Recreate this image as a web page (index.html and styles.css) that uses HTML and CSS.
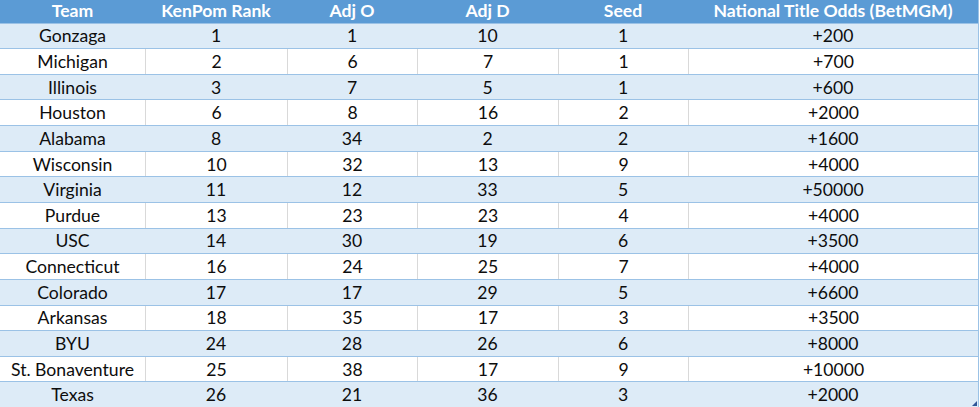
FILE: index.html
```html
<!DOCTYPE html>
<html>
<head>
<meta charset="utf-8">
<link rel="stylesheet" href="styles.css">
</head>
<body>
<div class="sheet">
  <div class="row head">
    <div class="c c1">Team</div><div class="c c2">KenPom Rank</div><div class="c c3">Adj O</div><div class="c c4">Adj D</div><div class="c c5">Seed</div><div class="c c6">National Title Odds (BetMGM)</div>
  </div>
  <div class="row band"><div class="c c1">Gonzaga</div><div class="c c2">1</div><div class="c c3">1</div><div class="c c4">10</div><div class="c c5">1</div><div class="c c6">+200</div></div>
  <div class="row plain"><div class="c c1">Michigan</div><div class="c c2">2</div><div class="c c3">6</div><div class="c c4">7</div><div class="c c5">1</div><div class="c c6">+700</div></div>
  <div class="row band"><div class="c c1">Illinois</div><div class="c c2">3</div><div class="c c3">7</div><div class="c c4">5</div><div class="c c5">1</div><div class="c c6">+600</div></div>
  <div class="row plain"><div class="c c1">Houston</div><div class="c c2">6</div><div class="c c3">8</div><div class="c c4">16</div><div class="c c5">2</div><div class="c c6">+2000</div></div>
  <div class="row band"><div class="c c1">Alabama</div><div class="c c2">8</div><div class="c c3">34</div><div class="c c4">2</div><div class="c c5">2</div><div class="c c6">+1600</div></div>
  <div class="row plain"><div class="c c1">Wisconsin</div><div class="c c2">10</div><div class="c c3">32</div><div class="c c4">13</div><div class="c c5">9</div><div class="c c6">+4000</div></div>
  <div class="row band"><div class="c c1">Virginia</div><div class="c c2">11</div><div class="c c3">12</div><div class="c c4">33</div><div class="c c5">5</div><div class="c c6">+50000</div></div>
  <div class="row plain"><div class="c c1">Purdue</div><div class="c c2">13</div><div class="c c3">23</div><div class="c c4">23</div><div class="c c5">4</div><div class="c c6">+4000</div></div>
  <div class="row band"><div class="c c1">USC</div><div class="c c2">14</div><div class="c c3">30</div><div class="c c4">19</div><div class="c c5">6</div><div class="c c6">+3500</div></div>
  <div class="row plain"><div class="c c1">Connecticut</div><div class="c c2">16</div><div class="c c3">24</div><div class="c c4">25</div><div class="c c5">7</div><div class="c c6">+4000</div></div>
  <div class="row band"><div class="c c1">Colorado</div><div class="c c2">17</div><div class="c c3">17</div><div class="c c4">29</div><div class="c c5">5</div><div class="c c6">+6600</div></div>
  <div class="row plain"><div class="c c1">Arkansas</div><div class="c c2">18</div><div class="c c3">35</div><div class="c c4">17</div><div class="c c5">3</div><div class="c c6">+3500</div></div>
  <div class="row band"><div class="c c1">BYU</div><div class="c c2">24</div><div class="c c3">28</div><div class="c c4">26</div><div class="c c5">6</div><div class="c c6">+8000</div></div>
  <div class="row plain"><div class="c c1">St. Bonaventure</div><div class="c c2">25</div><div class="c c3">38</div><div class="c c4">17</div><div class="c c5">9</div><div class="c c6">+10000</div></div>
  <div class="row band"><div class="c c1">Texas</div><div class="c c2">26</div><div class="c c3">21</div><div class="c c4">36</div><div class="c c5">3</div><div class="c c6">+2000</div></div>
  <div class="handle"></div>
</div>
</body>
</html>
```
FILE: styles.css
```css
html, body {
  margin: 0;
  padding: 0;
  background: #ffffff;
}
.sheet {
  position: relative;
  width: 978px;
  height: 407px;
  display: flex;
  flex-direction: column;
  border-right: 1px solid #9bc2e6;
  font-family: Lato, "Open Sans", sans-serif;
  font-size: 17.6px;
  color: #0d0d0d;
  overflow: hidden;
}
.row {
  display: flex;
  flex: none;
  height: 25.65px;
  box-sizing: border-box;
  border-top: 1px solid #9bc2e6;
}
.row.head {
  height: 22.5px;
  border-top: none;
  background: #5b9bd5;
  color: #ffffff;
  font-weight: 700;
}
.row.band { background: #ddebf7; }
.row.plain { background: #ffffff; }
.c {
  display: flex;
  align-items: center;
  justify-content: center;
  box-sizing: border-box;
  white-space: nowrap;
}
.row.head .c { padding-bottom: 2px; }
.row.plain .c + .c { border-left: 1px solid #d9d9d9; }
.c1 { width: 145px; }
.c2 { width: 142px; }
.c3 { width: 130px; }
.c4 { width: 141px; }
.c5 { width: 130px; }
.c6 { flex: 1; }
.handle {
  position: absolute;
  right: 1px;
  bottom: 1px;
  width: 0;
  height: 0;
  border-left: 5px solid transparent;
  border-bottom: 5px solid #2f5597;
}
```
